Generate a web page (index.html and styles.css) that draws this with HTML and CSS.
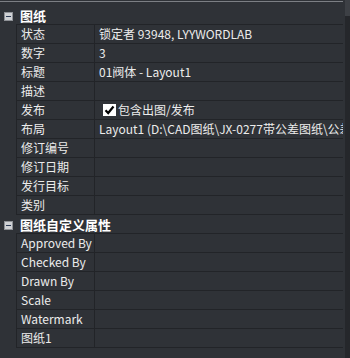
FILE: index.html
```html
<!DOCTYPE html>
<html lang="zh">
<head>
  <meta charset="UTF-8">
  <title>图纸特性</title>
  <link rel="stylesheet" href="styles.css">
</head>
<body>
  <div class="window">
    <div class="panel">
      <div class="topline"></div>

      <!-- 图纸 -->
      <div class="section-head">
        <span class="toggle"></span>
        <span class="section-title">图纸</span>
      </div>
      <div class="table">
        <div class="row"><div class="name">状态</div><div class="value">锁定者 93948, LYYWORDLAB</div></div>
        <div class="row"><div class="name">数字</div><div class="value">3</div></div>
        <div class="row"><div class="name">标题</div><div class="value">01阀体 - Layout1</div></div>
        <div class="row"><div class="name">描述</div><div class="value"></div></div>
        <div class="row">
          <div class="name">发布</div>
          <div class="value check-cell">
            <span class="checkbox">
              <svg width="11" height="10" viewBox="0 0 11 10"><path d="M1.5 5.2 L4.2 8 L9.5 1.5" fill="none" stroke="#000" stroke-width="2.2"/></svg>
            </span>包含出图/发布
          </div>
        </div>
        <div class="row"><div class="name">布局</div><div class="value">Layout1 (D:\CAD图纸\JX-0277带公差图纸\公差图纸.dwg)</div></div>
        <div class="row"><div class="name">修订编号</div><div class="value"></div></div>
        <div class="row"><div class="name">修订日期</div><div class="value"></div></div>
        <div class="row"><div class="name">发行目标</div><div class="value"></div></div>
        <div class="row"><div class="name">类别</div><div class="value"></div></div>
      </div>

      <!-- 图纸自定义属性 -->
      <div class="section-head">
        <span class="toggle"></span>
        <span class="section-title">图纸自定义属性</span>
      </div>
      <div class="table">
        <div class="row"><div class="name">Approved By</div><div class="value"></div></div>
        <div class="row"><div class="name">Checked By</div><div class="value"></div></div>
        <div class="row"><div class="name">Drawn By</div><div class="value"></div></div>
        <div class="row"><div class="name">Scale</div><div class="value"></div></div>
        <div class="row"><div class="name">Watermark</div><div class="value"></div></div>
        <div class="row"><div class="name">图纸1</div><div class="value"></div></div>
      </div>
    </div>

    <div class="scrollbar"><div class="thumb"></div></div>
  </div>
</body>
</html>
```

FILE: styles.css
```css
body {
  margin: 0;
  background-color: #2f3237;
  font-family: "Noto Sans CJK SC", "Noto Sans", sans-serif;
  font-size: 12px;
  color: #ececec;
}

.window {
  display: flex;
  width: 350px;
  height: 358px;
  overflow: hidden;
}

.panel {
  width: 343px;
  flex-shrink: 0;
}

.topline {
  height: 1px;
  margin-top: 1px;
  margin-bottom: 4px;
  background-color: #7c7f84;
}

.section-head {
  display: flex;
  align-items: center;
  height: 18px;
}

.toggle {
  position: relative;
  box-sizing: border-box;
  width: 9px;
  height: 9px;
  margin-left: 4px;
  margin-right: 7px;
  margin-top: 2px;
  background-color: #cfd1d4;
  border: 1px solid #8e9196;
}

.toggle::after {
  content: "";
  position: absolute;
  left: 1px;
  top: 3px;
  width: 5px;
  height: 1px;
  background-color: #2c3b55;
}

.section-title {
  font-weight: bold;
  font-size: 13px;
  color: #ffffff;
}

.table {
  margin-left: 16px;
  width: 327px;
  box-sizing: border-box;
  border-left: 1px solid #222428;
  border-top: 1px solid #222428;
}

.row {
  display: flex;
  height: 18px;
  border-bottom: 1px solid #222428;
  line-height: 18px;
}

.name {
  width: 73px;
  flex-shrink: 0;
  padding-left: 4px;
  border-right: 1px solid #222428;
  white-space: nowrap;
  overflow: hidden;
}

.value {
  flex: 1;
  padding-left: 4px;
  white-space: nowrap;
  overflow: hidden;
}

.check-cell {
  display: flex;
  align-items: center;
  padding-left: 8px;
}

.checkbox {
  display: flex;
  align-items: center;
  justify-content: center;
  width: 13px;
  height: 12px;
  margin-right: 2px;
  background-color: #ffffff;
}

.scrollbar {
  width: 7px;
  background-color: #25272b;
  border-left: 2px solid #2f3237;
}

.thumb {
  height: 16px;
  background-color: #3d4045;
}
```
